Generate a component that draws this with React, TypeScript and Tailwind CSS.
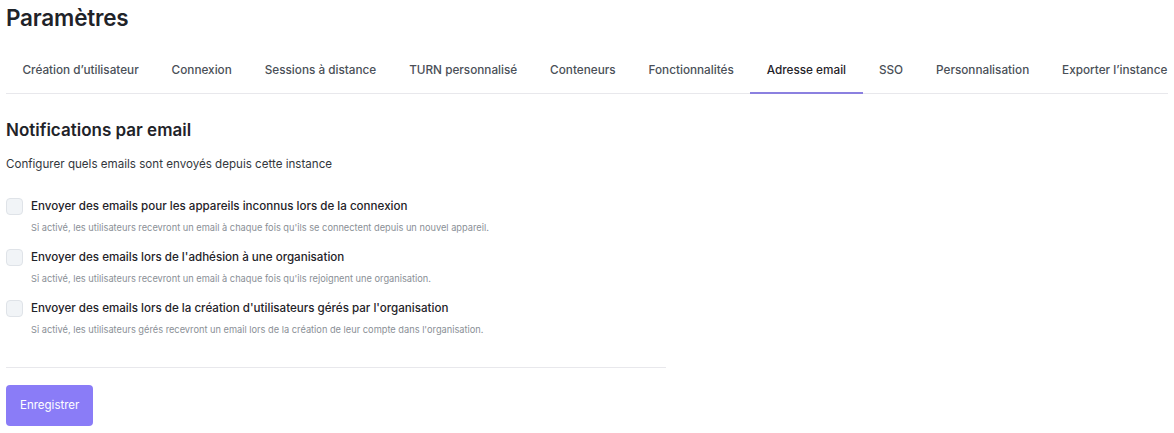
import React from "react";

const tabs = [
  "Création d’utilisateur",
  "Connexion",
  "Sessions à distance",
  "TURN personnalisé",
  "Conteneurs",
  "Fonctionnalités",
  "Adresse email",
  "SSO",
  "Personnalisation",
  "Exporter l’instance",
];

const items = [
  {
    label: "Envoyer des emails pour les appareils inconnus lors de la connexion",
    desc: "Si activé, les utilisateurs recevront un email à chaque fois qu'ils se connectent depuis un nouvel appareil.",
  },
  {
    label: "Envoyer des emails lors de l'adhésion à une organisation",
    desc: "Si activé, les utilisateurs recevront un email à chaque fois qu'ils rejoignent une organisation.",
  },
  {
    label: "Envoyer des emails lors de la création d'utilisateurs gérés par l'organisation",
    desc: "Si activé, les utilisateurs gérés recevront un email lors de la création de leur compte dans l'organisation.",
  },
];

export default function App() {
  return (
    <div
      className="bg-white text-[#1f2329] px-[6px] pt-[4px]"
      style={{ fontFamily: "Inter, 'Noto Sans', sans-serif" }}
    >
      <h1 className="text-[22.5px] font-semibold leading-[28px] tracking-[-0.2px]">Paramètres</h1>
      <div className="mt-[18px] flex border-b border-[#e8e8ec]">
        {tabs.map((t) => {
          const active = t === "Adresse email";
          return (
            <div
              key={t}
              className={
                "px-[16.45px] h-[44px] flex items-center text-[11.75px] font-medium whitespace-nowrap border-b-2 -mb-px " +
                (active ? "border-[#8b80e0] text-[#1f2329]" : "border-transparent text-[#4a4f57]")
              }
            >
              {t}
            </div>
          );
        })}
      </div>
      <div className="w-[660px]">
        <h2 className="mt-[24px] text-[17px] font-semibold leading-[24px]">Notifications par email</h2>
        <p className="mt-[13px] text-[11.6px] text-[#33373d] leading-[18px]">
          Configurer quels emails sont envoyés depuis cette instance
        </p>
        <div className="mt-[24px] flex flex-col gap-[14px]">
          {items.map((it) => (
            <div key={it.label} className="flex gap-[8px]">
              <div className="w-[17px] h-[17px] rounded-[4px] border border-[#dfe3e8] bg-[#f1f4f7] mt-[1px] shrink-0" />
              <div className="flex flex-col">
                <div className="text-[11.6px] font-medium leading-[18px] text-[#1f2329]">{it.label}</div>
                <div className="mt-[6px] text-[9.25px] leading-[13px] text-[#8a8f96]">{it.desc}</div>
              </div>
            </div>
          ))}
        </div>
        <div className="mt-[31px] border-t border-[#e8e8ec]" />
        <button className="mt-[17px] h-[41px] px-[14px] rounded-[4px] bg-[#8a7cf7] text-white text-[11.5px]">
          Enregistrer
        </button>
      </div>
    </div>
  );
}
